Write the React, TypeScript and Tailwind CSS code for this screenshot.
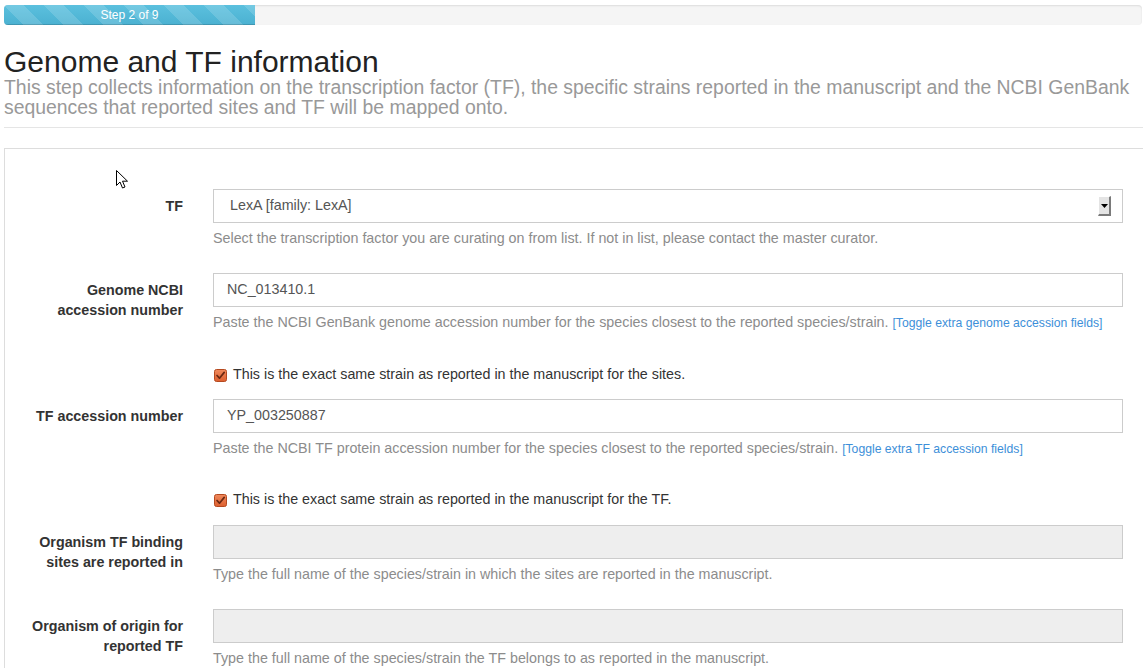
import React from "react";

function Checkbox() {
  return (
    <svg width="13" height="13" viewBox="0 0 13 13" className="shrink-0">
      <defs>
        <linearGradient id="cbg" x1="0" y1="0" x2="0" y2="1">
          <stop offset="0" stopColor="#f08a5d" />
          <stop offset="1" stopColor="#dd5f2f" />
        </linearGradient>
      </defs>
      <rect x="0.5" y="0.5" width="12" height="12" rx="2" fill="url(#cbg)" stroke="#b5491f" />
      <path d="M3 6.5 L5.5 9.2 L10.2 3.4" fill="none" stroke="#6a2812" strokeWidth="1.7" strokeLinecap="round" strokeLinejoin="round" />
    </svg>
  );
}

function SelectButton() {
  return (
    <div className="absolute right-[11px] top-[6px] w-[13px] h-[20px] bg-[#e4e4e4] border-t border-l border-t-white border-l-white border-r-2 border-b-2 border-r-[#7a7a7a] border-b-[#7a7a7a] flex items-center justify-center">
      <svg width="7" height="4" viewBox="0 0 7 4">
        <path d="M0 0 H7 L3.5 4 Z" fill="#000" />
      </svg>
    </div>
  );
}

function Label({ children }: { children: React.ReactNode }) {
  return (
    <div className="w-[160px] shrink-0 text-right font-bold text-[14.3px] leading-[20px] text-[#333] pt-[7px]">
      {children}
    </div>
  );
}

function Help({ children }: { children: React.ReactNode }) {
  return <div className="mt-[5px] h-[20px] text-[14.3px] leading-[20px] text-[#8c8c8c] whitespace-nowrap">{children}</div>;
}

function Toggle({ children }: { children: React.ReactNode }) {
  return <span className="text-[12.2px] leading-[1] text-[#3d8fd9]">{children}</span>;
}

function TextInput({ value, disabled }: { value?: string; disabled?: boolean }) {
  return (
    <div
      className={
        "w-[910px] h-[34px] border border-[#cccccc] pl-[13px] flex items-center text-[14.3px] text-[#555] " +
        (disabled ? "bg-[#eeeeee]" : "bg-white")
      }
    >
      {value}
    </div>
  );
}

function CheckRow({ text }: { text: string }) {
  return (
    <div className="flex items-center h-[20px] ml-[191px] gap-[6px] text-[14.3px] text-[#333]">
      <Checkbox />
      <span>{text}</span>
    </div>
  );
}

export default function App() {
  return (
    <div className="relative w-[1143px] h-[672px] overflow-hidden bg-white font-['Liberation_Sans',Arial,sans-serif] text-[#333]">
      {/* progress */}
      <div className="pt-[5px] pl-[4px] pr-[1px]">
        <div className="h-[20px] rounded-[4px] bg-[#f5f5f5] shadow-[inset_0_1px_2px_rgba(0,0,0,0.1)] overflow-hidden flex">
          <div className="w-[251px] h-full bg-[linear-gradient(45deg,rgba(255,255,255,0.15)_25%,transparent_25%,transparent_50%,rgba(255,255,255,0.15)_50%,rgba(255,255,255,0.15)_75%,transparent_75%,transparent),linear-gradient(to_bottom,#5bc0de,#4bb1d1)] bg-[length:40px_40px,100%_100%] shadow-[inset_0_-1px_0_rgba(0,0,0,0.15)] flex items-center justify-center text-white text-[12px] leading-[20px]">
            Step 2 of 9
          </div>
        </div>
      </div>

      {/* header */}
      <div className="pl-[4px]">
        <h1 className="mt-[22px] text-[30px] leading-[30px] text-[#222] font-normal">Genome and TF information</h1>
        <div className="text-[19.4px] leading-[20px] text-[#999]">
          This step collects information on the transcription factor (TF), the specific strains reported in the manuscript and the NCBI GenBank sequences that reported sites and TF will be mapped onto.
        </div>
        <div className="mt-[10px] h-px bg-[#e5e5e5]" />
      </div>

      {/* form box */}
      <div className="ml-[4px] mt-[20px] border-l border-t border-[#dddddd] pt-[40px] pl-[18px]">
        {/* TF */}
        <div className="flex gap-[30px] mb-[25px]">
          <Label>TF</Label>
          <div>
            <div className="relative w-[910px] h-[34px] border border-[#cccccc] bg-white pl-[16px] flex items-center text-[14.3px] text-[#555]">
              LexA [family: LexA]
              <SelectButton />
            </div>
            <Help>Select the transcription factor you are curating on from list. If not in list, please contact the master curator.</Help>
          </div>
        </div>

        {/* Genome */}
        <div className="flex gap-[30px] mb-[33px]">
          <Label>Genome NCBI accession number</Label>
          <div>
            <TextInput value="NC_013410.1" />
            <Help>
              Paste the NCBI GenBank genome accession number for the species closest to the reported species/strain.{" "}
              <Toggle>[Toggle extra genome accession fields]</Toggle>
            </Help>
          </div>
        </div>

        <CheckRow text="This is the exact same strain as reported in the manuscript for the sites." />

        {/* TF accession */}
        <div className="flex gap-[30px] mt-[14px] mb-[32px]">
          <Label>TF accession number</Label>
          <div>
            <TextInput value="YP_003250887" />
            <Help>
              Paste the NCBI TF protein accession number for the species closest to the reported species/strain.{" "}
              <Toggle>[Toggle extra TF accession fields]</Toggle>
            </Help>
          </div>
        </div>

        <CheckRow text="This is the exact same strain as reported in the manuscript for the TF." />

        {/* Organism binding */}
        <div className="flex gap-[30px] mt-[15px] mb-[25px]">
          <Label>Organism TF binding sites are reported in</Label>
          <div>
            <TextInput disabled />
            <Help>Type the full name of the species/strain in which the sites are reported in the manuscript.</Help>
          </div>
        </div>

        {/* Organism origin */}
        <div className="flex gap-[30px] mb-[25px]">
          <Label>Organism of origin for reported TF</Label>
          <div>
            <TextInput disabled />
            <Help>Type the full name of the species/strain the TF belongs to as reported in the manuscript.</Help>
          </div>
        </div>
      </div>

      {/* mouse cursor */}
      <svg className="absolute left-[116px] top-[170px]" width="13" height="20" viewBox="0 0 13 20">
        <path d="M0.5 0.5 L0.5 15.5 L4 12 L6.5 18 L9 17 L6.5 11.2 L11.5 11.2 Z" fill="#fff" stroke="#000" strokeWidth="1" strokeLinejoin="miter" />
      </svg>
    </div>
  );
}
